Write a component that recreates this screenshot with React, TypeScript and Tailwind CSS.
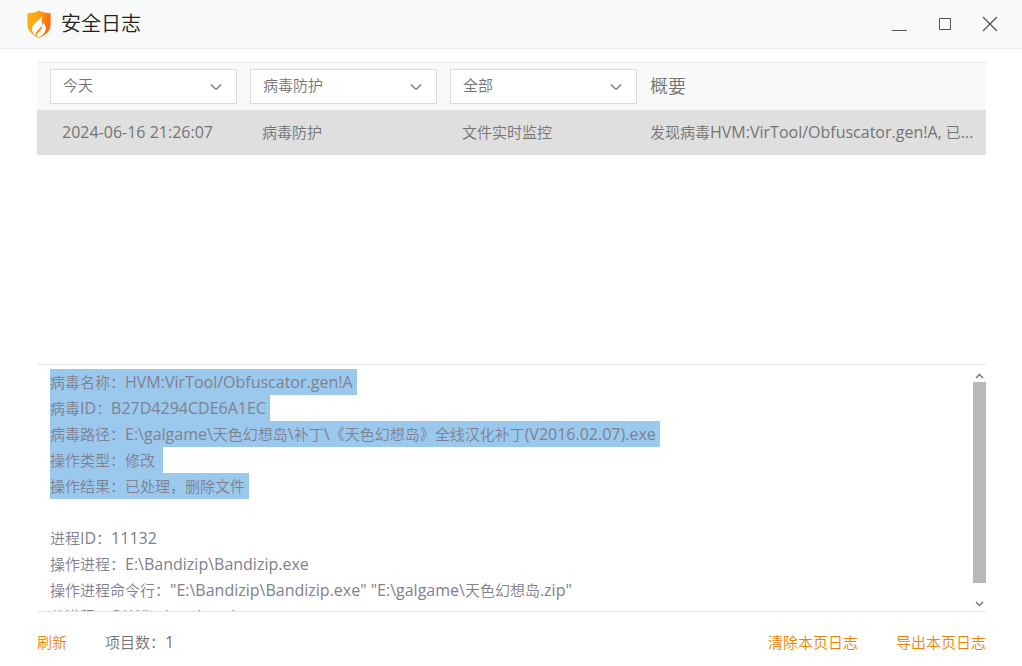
import React, { useState } from 'react';

const filters = [
  { id: 'date', label: '日期', options: ['今天', '最近三天', '最近一周'] },
  { id: 'category', label: '类别', options: ['病毒防护', '系统防护', '网络防护'] },
  { id: 'feature', label: '功能', options: ['全部', '文件实时监控', '病毒查杀'] },
];

const logs = [
  {
    time: '2024-06-16 21:26:07',
    category: '病毒防护',
    feature: '文件实时监控',
    summary: '发现病毒HVM:VirTool/Obfuscator.gen!A, 已...',
  },
];

const details = [
  { text: '病毒名称：HVM:VirTool/Obfuscator.gen!A', selected: true },
  { text: '病毒ID：B27D4294CDE6A1EC', selected: true },
  { text: '病毒路径：E:\\galgame\\天色幻想岛\\补丁\\《天色幻想岛》全线汉化补丁(V2016.02.07).exe', selected: true },
  { text: '操作类型：修改 ', selected: true },
  { text: '操作结果：已处理，删除文件', selected: true },
  { text: '', selected: false },
  { text: '进程ID：11132', selected: false },
  { text: '操作进程：E:\\Bandizip\\Bandizip.exe', selected: false },
  { text: '操作进程命令行："E:\\Bandizip\\Bandizip.exe" "E:\\galgame\\天色幻想岛.zip"', selected: false },
  { text: '父进程：C:\\Windows\\explorer.exe', selected: false },
];

// Latin runs are set one size up so they balance with the Chinese glyphs
const Mixed: React.FC<{ text: string }> = ({ text }) => (
  <>
    {text.split(/([\x20-\x7e]+)/).map((part, i) =>
      i % 2 === 1 ? (
        <span key={i} className="text-[16px] leading-none font-normal">{part}</span>
      ) : (
        part
      )
    )}
  </>
);

const Logo = () => (
  <svg className="w-6 h-7" viewBox="0 0 24 28" fill="none">
    <defs>
      <linearGradient id="shield" x1="0" y1="0" x2="24" y2="6" gradientUnits="userSpaceOnUse">
        <stop offset="0" stopColor="#fdb714" />
        <stop offset="0.5" stopColor="#fda313" />
        <stop offset="1" stopColor="#fb6a0c" />
      </linearGradient>
    </defs>
    <path d="M12 0.5C15 2.3 19.5 3.2 23.6 3.2V15C23.6 21 18 25.5 12 28C6 25.5 0.4 21 0.4 15V3.2C4.5 3.2 9 2.3 12 0.5Z" fill="url(#shield)" />
    <path d="M14.5 4.5C15.5 9.5 5 12.5 5 19C5 22 6.5 24 8.5 25.5C8 20 15.5 18 16 12.5C18.5 15 19.5 18 18.3 21C17 24 14.5 26 12 27.5C9.8 26.5 9.5 25.8 9.5 25.8C10 22.5 14.5 21 14.8 17.5Z" fill="#fff" />
  </svg>
);

const Chevron: React.FC<{ className: string }> = ({ className }) => (
  <svg className={className} viewBox="0 0 12 8" fill="none" stroke="currentColor" strokeWidth="1.2">
    <path d="M1 1.5L6 6.5L11 1.5" />
  </svg>
);

const ScrollArrow: React.FC<{ className: string }> = ({ className }) => (
  <svg className={className} viewBox="0 0 9 6" fill="none" stroke="currentColor" strokeWidth="1.5">
    <path d="M1 1L4.5 4.5L8 1" />
  </svg>
);

const TitleBar = () => (
  <header className="flex h-[49px] shrink-0 items-center justify-between border-b border-[#eceeed] bg-[#f8faf9] pl-[27px] pr-6">
    <div className="flex items-center gap-[10px]">
      <Logo />
      <h1 className="text-[20px] leading-6 text-[#222]">安全日志</h1>
    </div>
    <div className="flex items-center gap-[29px] text-[#555]">
      <button type="button" aria-label="最小化" className="h-4 w-4">
        <svg className="h-4 w-4" viewBox="0 0 16 16" stroke="currentColor"><path d="M0 14.5H15" /></svg>
      </button>
      <button type="button" aria-label="最大化" className="h-4 w-4">
        <svg className="h-4 w-4" viewBox="0 0 16 16" fill="none" stroke="currentColor"><path d="M2.5 2.5H13.5V13.5H2.5Z" /></svg>
      </button>
      <button type="button" aria-label="关闭" className="h-4 w-4">
        <svg className="h-4 w-4" viewBox="0 0 16 16" stroke="currentColor" strokeWidth="1.3"><path d="M1 1L15 15M15 1L1 15" /></svg>
      </button>
    </div>
  </header>
);

const LogTable = () => (
  <table className="w-full table-fixed border-separate border-spacing-0 border-t border-[#eceeed] text-left text-[#747474]">
    <thead>
      <tr className="h-[47px] bg-[#f8faf9]">
        {filters.map(filter => (
          <th key={filter.id} className="w-[200px] pl-[13px] font-[350]">
            <div className="relative">
              <select
                aria-label={filter.label}
                className="block h-[35px] w-full appearance-none border border-[#d9dcdb] bg-white pl-3 pr-8 pb-[2px]"
              >
                {filter.options.map(option => (
                  <option key={option}>{option}</option>
                ))}
              </select>
              <Chevron className="pointer-events-none absolute top-[14px] right-[15px] h-2 w-3" />
            </div>
          </th>
        ))}
        <th className="pl-[13px] text-[18px] font-[350]">概要</th>
      </tr>
    </thead>
    <tbody>
      {logs.map(log => (
        <tr key={log.time} className="h-[45px] bg-[#dfdfdf]">
          <td className="pl-[25px]"><Mixed text={log.time} /></td>
          <td className="pl-[25px]"><Mixed text={log.category} /></td>
          <td className="pl-[25px]"><Mixed text={log.feature} /></td>
          <td className="truncate pl-[13px]"><Mixed text={log.summary} /></td>
        </tr>
      ))}
    </tbody>
  </table>
);

const DetailPanel = () => (
  <section className="flex h-[248px] shrink-0 border-y border-[#e4e4e4]">
    <div className="min-w-0 flex-1 overflow-hidden pt-1 pl-[13px] text-[#80808e]">
      {details.map((line, i) => (
        <p key={i} className="h-[26px] leading-[26px] whitespace-pre">
          <span className={line.selected ? 'inline-block h-[26px] bg-[#9bc9ee] pr-1' : ''}>
            <Mixed text={line.text} />
          </span>
        </p>
      ))}
    </div>
    <div className="flex w-[13px] flex-col items-center text-[#777]">
      <ScrollArrow className="mt-2 mb-[3px] h-[6px] w-[9px] shrink-0 rotate-180" />
      <div className="h-[201px] w-full bg-[#b8b8b8]" />
      <ScrollArrow className="mt-auto mb-1 h-[6px] w-[9px] shrink-0" />
    </div>
  </section>
);

const App: React.FC = () => {
  const [count] = useState(logs.length);

  return (
    <div className="flex min-h-screen flex-col bg-white font-['Open_Sans','Noto_Sans_CJK_SC',sans-serif] text-[15px] font-[350]">
      <TitleBar />
      <main className="flex flex-1 flex-col pt-[13px] pr-9 pl-[37px]">
        <div className="flex-1">
          <LogTable />
        </div>
        <DetailPanel />
        <footer className="flex h-[54px] shrink-0 items-start justify-between pt-[17px] leading-[26px] text-[#f08300]">
          <div className="flex gap-[38px]">
            <button type="button">刷新</button>
            <span className="text-[#747474]"><Mixed text={`项目数：${count}`} /></span>
          </div>
          <div className="flex gap-[38px]">
            <button type="button">清除本页日志</button>
            <button type="button">导出本页日志</button>
          </div>
        </footer>
      </main>
    </div>
  );
};

export default App;
